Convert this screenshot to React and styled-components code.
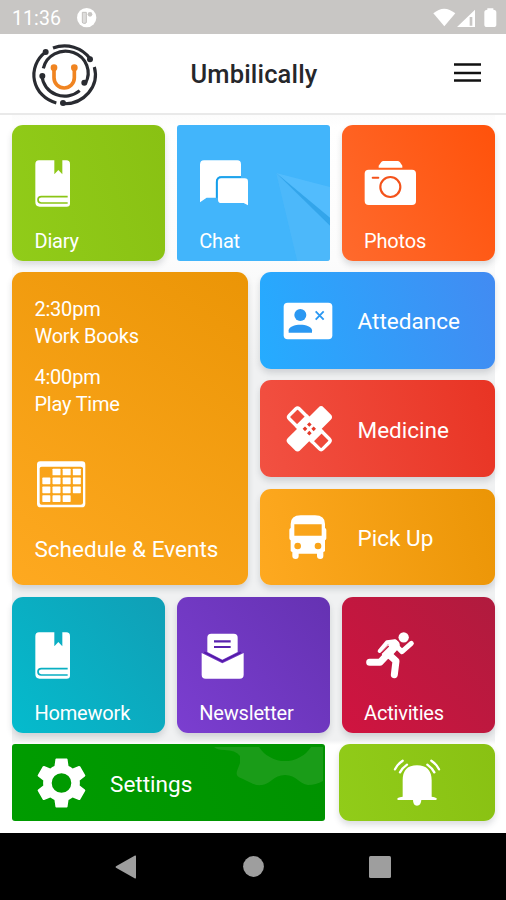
import React from "react";
import styled, { createGlobalStyle } from "styled-components";

const GlobalStyle = createGlobalStyle`
  * { box-sizing: border-box; }
  body { margin: 0; background: #fff; font-family: Roboto, "Noto Sans", sans-serif; }
`;

const Screen = styled.div`
  width: 506px;
  height: 900px;
  display: flex;
  flex-direction: column;
  overflow: hidden;
  background: #fff;
`;

const StatusBar = styled.div`
  height: 34px;
  flex: none;
  background: #c8c6c4;
  display: flex;
  align-items: center;
  padding: 2px 9px 0 12px;
  color: #fff;
`;

const Clock = styled.span`
  font-size: 19.5px;
  letter-spacing: 0.1px;
  width: 64.5px;
  line-height: 24px;
  padding-top: 1px;
`;

const StatusIcons = styled.div`
  margin-left: auto;
  display: flex;
`;

const Svg = styled.svg`
  display: block;
  flex: none;
  overflow: visible;
`;

const Header = styled.header`
  height: 81px;
  flex: none;
  display: grid;
  grid-template-columns: 1fr auto 1fr;
  align-items: center;
  padding: 0 25px 0 27px;
  border-bottom: 2px solid #e9e9e9;
`;

const Brand = styled.div`
  padding: 3px 0 0 4.5px;
`;

const Title = styled.h1`
  margin: 1px 0 0;
  font-size: 25.5px;
  line-height: 30px;
  font-weight: 500;
  color: #26272b;
  letter-spacing: 0.15px;
`;

const MenuButton = styled.button`
  justify-self: end;
  border: 0;
  padding: 0;
  margin-bottom: 2px;
  background: none;
`;

const Board = styled.main`
  flex: 1;
  width: 483px;
  margin-left: 12px;
  padding-top: 9.5px;
  display: flex;
  flex-direction: column;
  background: linear-gradient(#fcfcfc 0, #fff 12px, #fcfcfc 145px, #f0f1f2 250px, #f0f1f2 625px, #fff 630px);
`;

const Row = styled.div`
  display: flex;
  flex: none;
  gap: ${(p) => p.$gap || 11.5}px;
  margin-bottom: ${(p) => p.$after || 0}px;
`;

const Stack = styled.div`
  display: flex;
  flex-direction: column;
  gap: 11.8px;
  width: 235.5px;
`;

const Tile = styled.section`
  width: ${(p) => p.$width || 153.3}px;
  height: ${(p) => p.$height || 136}px;
  flex: none;
  overflow: hidden;
  position: relative;
  border-radius: ${(p) => (p.$flat ? 3 : 11)}px;
  background: ${(p) => p.$fill};
  box-shadow: ${(p) => (p.$flat ? "none" : "0 4px 6px rgba(50, 60, 70, 0.17)")};
  color: #fff;
`;

const SquareTile = styled(Tile)`
  display: flex;
  flex-direction: column;
  padding: 35px 0 0 22.5px;
`;

const WideTile = styled(Tile)`
  display: flex;
  align-items: center;
  padding-left: ${(p) => (p.$center ? 0 : 23.5)}px;
  justify-content: ${(p) => (p.$center ? "center" : "flex-start")};
`;

const IconSlot = styled.div`
  height: 69px;
  flex: none;
`;

const Label = styled.span`
  font-size: 20px;
  line-height: 24px;
  letter-spacing: -0.2px;
  white-space: nowrap;
`;

const WideLabel = styled(Label)`
  font-size: 22.5px;
  line-height: 26px;
  letter-spacing: 0.02px;
  padding: 2px 0 0 ${(p) => p.$indent || 24.5}px;
`;

const ScheduleTile = styled(Tile)`
  padding: 23.5px 0 0 22.4px;
  display: flex;
  flex-direction: column;
`;

const EventItem = styled.p`
  margin: 0 0 14px;
  font-size: 20px;
  line-height: 27px;
  letter-spacing: -0.2px;
  span { display: block; }
`;

const CalendarSlot = styled.div`
  padding: 29px 0 0 2.6px;
  height: 102px;
`;

const Backdrop = styled.svg`
  position: absolute;
  inset: 0;
  width: 100%;
  height: 100%;
`;

const NavBar = styled.nav`
  height: 67px;
  flex: none;
  background: #000;
  display: flex;
  align-items: center;
  justify-content: space-between;
  padding: 0 115px;
`;

const HomeButton = styled.div`
  padding-left: 2px;
`;

const BookIcon = ({ ink }) => (
  <Svg width="36" height="48" viewBox="105 124 108 144">
    <path
      fill="#fff"
      d="M117 125H163V167L175 154L187 167V125H199Q210 125 210 136V255Q210 264 200 264H119Q106 264 106 250V137Q106 125 117 125Z"
    />
    <path d="M203 234H124Q114 234 114 243.500T124 253H203" fill="none" stroke={ink} strokeWidth="5" />
  </Svg>
);

const ChatIcon = () => (
  <Svg width="50" height="48" viewBox="599 124 150 144">
    <path fill="#fff" d="M614 125H714Q725 125 725 137V173H667Q650 173 650 190V237H622L602 251V138Q602 125 614 125Z" />
    <path fill="#fff" d="M666 179H736Q746 179 746 189V260L733 253H666Q656 253 656 243V189Q656 179 666 179Z" />
    <path d="M652 237V190Q652 175 667 175H725" fill="none" stroke="#159ee8" strokeWidth="5" />
  </Svg>
);

const CameraIcon = () => (
  <Svg width="53" height="48" viewBox="333 124 159 144">
    <path fill="#fff" d="M377 147V141L385 130Q387 127 392 127H433Q438 127 441 131L448 141V147Z" />
    <rect x="335" y="153" width="154" height="106" rx="12" fill="#fff" />
    <circle cx="412" cy="205" r="30" fill="none" stroke="#f4531b" strokeWidth="6.500" />
    <path d="M359 177H376" stroke="#f4531b" strokeWidth="6" strokeLinecap="round" />
  </Svg>
);

const calendarCells = [
  [1, 2, 3],
  [0, 1, 2, 3],
  [0, 1, 2, 3],
  [0, 1, 2],
];

const CalendarIcon = () => (
  <Svg width="49" height="47" viewBox="110 578 147 141">
    <path
      fill="#fff"
      fillRule="evenodd"
      d="M120 579H245Q255 579 255 589V706Q255 717 244 717H121Q110 717 110 706V589Q110 579 120 579ZM124 595Q118 595 118 600V703Q118 709 124 709H241Q248 709 248 703V600Q248 595 241 595Z"
    />
    {calendarCells.map((row, y) =>
      row.map((x) => (
        <rect key={`${x}-${y}`} x={126 + x * 30.5} y={601 + y * 26.7} width="24" height="20" rx="2" fill="#fff" />
      ))
    )}
  </Svg>
);

const ContactIcon = () => (
  <Svg width="50" height="38" viewBox="90 99 150 114">
    <rect x="92" y="104" width="146" height="110" rx="12" fill="#fff" />
    <g fill="#2b98f2">
      <circle cx="142" cy="141" r="18" />
      <path d="M107 194V187C107 176 126 170 142 170S177 176 177 187V194Z" />
    </g>
    <path d="M188 130L212 155M212 130L188 155" stroke="#2b98f2" strokeWidth="5.500" />
  </Svg>
);

const BandageIcon = () => (
  <Svg width="50" height="48" viewBox="91 88 150 144">
    <g transform="translate(170 159.500)">
      <g transform="rotate(45)">
        <rect x="-71" y="-21" width="142" height="42" rx="7" fill="none" stroke="#fff" strokeWidth="10" />
        <path d="M-36 -26H36V26H-36Z" fill="#fff" />
      </g>
      <g transform="rotate(-45)">
        <rect x="-76" y="-26" width="152" height="52" rx="11" fill="#fff" />
      </g>
      <path
        d="M0 -20L7 -13L0 -6L-7 -13ZM0 6L7 13L0 20L-7 13ZM-13 -7L-6 0L-13 7L-20 0ZM13 -7L20 0L13 7L6 0Z"
        fill="#e53a2b"
      />
    </g>
  </Svg>
);

const BusIcon = () => (
  <Svg width="50" height="48" viewBox="90 90 150 144">
    <path
      fill="#fff"
      fillRule="evenodd"
      d="M113 123Q113 97 143 97H186Q216 97 216 123V135Q220 136 220 141V166Q220 171 216 172V203Q216 206 211 207V219Q211 228 202 228Q192 228 192 219V212H137V219Q137 228 128 228Q118 228 118 219V207Q113 206 113 203V172Q109 171 109 166V141Q109 136 113 135ZM124 124V158H206V124ZM134 179A10 10 0 1 0 134 199A10 10 0 1 0 134 179ZM195 179A10 10 0 1 0 195 199A10 10 0 1 0 195 179Z"
    />
  </Svg>
);

const NewsletterIcon = () => (
  <Svg width="45" height="48" viewBox="598 124 135 144">
    <path fill="#fff" d="M635 129H702Q714 129 714 141V184L668 207L623 184V141Q623 129 635 129Z" />
    <path fill="#fff" d="M606 187L668 218L732 187V252Q732 264 720 264H618Q606 264 606 252Z" />
    <path d="M643 152H693M643 169H693" stroke="#5822ae" strokeWidth="6.500" />
    <path d="M614 185L668 212L724 185" fill="none" stroke="#5419a8" strokeWidth="5" />
  </Svg>
);

const RunnerIcon = () => (
  <Svg width="51" height="48" viewBox="333 125 153 144">
    <circle cx="452" cy="141" r="15.500" fill="#fff" />
    <g fill="none" stroke="#fff" strokeLinecap="round" strokeLinejoin="round">
      <path d="M380 182L402 156L426 153" strokeWidth="12" />
      <path d="M423 160L447 184L475 159" strokeWidth="15" />
      <path d="M425 164L402 190" strokeWidth="31" />
      <path d="M400 196L381 216H350" strokeWidth="21" />
      <path d="M407 192L429 212L424 253" strokeWidth="21" />
    </g>
    <path d="M407 167L386 188" stroke="#c6173d" strokeWidth="4" />
  </Svg>
);

const GearIcon = () => (
  <Svg width="50" height="50" viewBox="1.600 1.800 20.400 20.400">
    <path
      fill="#fff"
      fillRule="evenodd"
      d="M19.430 12.980c.04-.32.07-.64.07-.98s-.03-.66-.07-.98l2.110-1.650c.19-.15.24-.42.12-.64l-2-3.460c-.12-.22-.39-.3-.61-.22l-2.490 1c-.52-.4-1.080-.73-1.690-.98l-.38-2.650C14.460 2.180 14.250 2 14 2h-4c-.25 0-.46.18-.49.42l-.38 2.650c-.61.25-1.170.59-1.690.98l-2.490-1c-.23-.09-.49 0-.61.22l-2 3.460c-.13.22-.07.49.12.64l2.110 1.650c-.04.32-.07.65-.07.98s.03.66.07.98l-2.110 1.650c-.19.15-.24.42-.12.64l2 3.460c.12.22.39.3.61.22l2.490-1c.52.4 1.080.73 1.690.98l.38 2.650c.03.24.24.42.49.42h4c.25 0 .46-.18.49-.42l.38-2.650c.61-.25 1.170-.59 1.690-.98l2.490 1c.23.09.49 0 .61-.22l2-3.460c.12-.22.07-.49-.12-.64l-2.110-1.650zM12 16a4 4 0 1 1 0-8 4 4 0 0 1 0 8z"
    />
  </Svg>
);

const BellIcon = () => (
  <Svg width="47" height="47" viewBox="421 64 141 141">
    <path
      fill="#fff"
      d="M450 177V128Q450 83 493 83T537 128V177Q546 178 552 182Q554 187 549 187H506Q505 204 493 204T481 187H438Q432 187 435 181Q441 178 450 177Z"
    />
    <path
      d="M427 95Q435 79 450 69M442 104Q449 91 463 81M559 95Q551 79 536 69M545 104Q538 91 524 81"
      fill="none"
      stroke="#fff"
      strokeWidth="7"
      strokeLinecap="round"
    />
  </Svg>
);

const Logo = () => (
  <Svg width="66" height="66" viewBox="96 127 198 198">
    <g fill="none" stroke="#292b31" strokeWidth="9.500">
      <path d="M137 157A92.500 87.500 0 0 0 169 310" />
      <path d="M159 145A92.500 87.500 0 0 1 271 178" />
      <path d="M283 202A92.500 87.500 0 0 1 189 312" />
      <path d="M130 206A68 65 0 1 1 256 251" />
      <path d="M126 229A68 65 0 0 0 239 273" />
    </g>
    <g fill="#292b31">
      <circle cx="137" cy="157" r="9" />
      <circle cx="270" cy="179" r="9" />
      <circle cx="189" cy="310" r="9" />
      <circle cx="253" cy="249" r="9" />
      <circle cx="127" cy="229" r="9" />
    </g>
    <path d="M162 204V234A30.500 31 0 0 0 223 234V204" fill="none" stroke="#f08421" strokeWidth="11" />
    <circle cx="162" cy="204" r="10" fill="#f08421" />
    <circle cx="223" cy="204" r="10" fill="#f08421" />
  </Svg>
);

const PlaneBackdrop = () => (
  <Backdrop viewBox="0 0 153 136" preserveAspectRatio="none">
    <path d="M99 48L153 62V136H120Z" fill="#62c4ff" opacity=".5" />
    <path d="M99 48L153 93V101Z" fill="#148ed8" opacity=".5" />
    <path d="M99 48L153 101V136H120Z" fill="#35aaf0" opacity=".2" />
  </Backdrop>
);

const GearBackdrop = () => (
  <Backdrop viewBox="0 0 312.500 77">
    <path
      d="M202 3H247A31 31 0 0 0 299 3H311V37Q304 41 296 41C287 40 285 31 273 31S259 40 250 41C242 42 238 38 231 35C225 33 224 31 225 27L228 19V12Q224 6 212 6Q205 6 202 3Z"
      fill="#1e9d1c"
      opacity=".85"
    />
  </Backdrop>
);

const green = "linear-gradient(75deg, #91cc19, #89c113)";
const amber = (angle) => `linear-gradient(${angle}deg, #fea920, #eb9506)`;

export default function App() {
  return (
    <Screen>
      <GlobalStyle />
      <StatusBar>
        <Clock>11:36</Clock>
        <Svg width="21" height="20" viewBox="232 23 63 60">
          <circle cx="261" cy="52" r="29" fill="#fff" />
          <path d="M248 36H260V65Q260 69 256 69H252Q248 69 248 65Z" fill="#dedddc" stroke="#c3c1bf" strokeWidth="3" />
          <circle cx="271" cy="42" r="7" fill="#c8c6c4" />
        </Svg>
        <StatusIcons>
          <Svg width="64" height="20" viewBox="539 23 192 60">
            <path d="M540 39Q572 11 606 39L573 78Z" fill="#fff" />
            <path fillRule="evenodd" d="M665 28V80H611ZM649 50V76H657V50Z" fill="#fff" />
            <path d="M702 28V24H720V28Q729 28 729 36V73Q729 80 721 80H701Q693 80 693 73V36Q693 28 702 28Z" fill="#fff" />
          </Svg>
        </StatusIcons>
      </StatusBar>
      <Header>
        <Brand><Logo /></Brand>
        <Title>Umbilically</Title>
        <MenuButton aria-label="Menu">
          <Svg width="27" height="19" viewBox="0 0 27 19">
            <path d="M0 1.500H27M0 10H27M0 17.500H27" stroke="#111" strokeWidth="2.400" />
          </Svg>
        </MenuButton>
      </Header>
      <Board>
        <Row $after={11.5}>
          <SquareTile $fill={green}>
            <IconSlot><BookIcon ink="#8bc516" /></IconSlot>
            <Label>Diary</Label>
          </SquareTile>
          <SquareTile $flat $fill="#42b5fb">
            <PlaneBackdrop />
            <IconSlot><ChatIcon /></IconSlot>
            <Label>Chat</Label>
          </SquareTile>
          <SquareTile $fill="linear-gradient(60deg, #ff6a2d, #ff520b)">
            <IconSlot><CameraIcon /></IconSlot>
            <Label>Photos</Label>
          </SquareTile>
        </Row>
        <Row $after={11.7}>
          <ScheduleTile $width={236} $height={313} $fill={amber(35)}>
            <EventItem><span>2:30pm</span><span>Work Books</span></EventItem>
            <EventItem><span>4:00pm</span><span>Play Time</span></EventItem>
            <CalendarSlot><CalendarIcon /></CalendarSlot>
            <WideLabel $indent="0">Schedule &amp; Events</WideLabel>
          </ScheduleTile>
          <Stack>
            <WideTile $width={235.5} $height={96.5} $fill="linear-gradient(75deg, #25acff, #428bf2)">
              <ContactIcon />
              <WideLabel>Attedance</WideLabel>
            </WideTile>
            <WideTile $width={235.5} $height={96.5} $fill="linear-gradient(75deg, #f25142, #e83424)">
              <BandageIcon />
              <WideLabel>Medicine</WideLabel>
            </WideTile>
            <WideTile $width={235.5} $height={96.5} $fill={amber(75)}>
              <BusIcon />
              <WideLabel>Pick Up</WideLabel>
            </WideTile>
          </Stack>
        </Row>
        <Row $after={11.5}>
          <SquareTile $fill="linear-gradient(50deg, #05bbcd, #109fb6)">
            <IconSlot><BookIcon ink="#08afc2" /></IconSlot>
            <Label>Homework</Label>
          </SquareTile>
          <SquareTile $fill="linear-gradient(50deg, #7b3ed0, #6532b2)">
            <IconSlot><NewsletterIcon /></IconSlot>
            <Label>Newsletter</Label>
          </SquareTile>
          <SquareTile $fill="linear-gradient(50deg, #d01440, #b01b3e)">
            <IconSlot><RunnerIcon /></IconSlot>
            <Label>Activities</Label>
          </SquareTile>
        </Row>
        <Row $gap={14.2}>
          <WideTile $flat $width={312.5} $height={77} $fill="linear-gradient(75deg, #009c00, #009200)">
            <GearBackdrop />
            <GearIcon />
            <WideLabel>Settings</WideLabel>
          </WideTile>
          <WideTile $center $width={156.3} $height={77} $fill={green}>
            <BellIcon />
          </WideTile>
        </Row>
      </Board>
      <NavBar>
        <Svg width="21" height="24" viewBox="0 0 21 24">
          <path d="M1 11.200L20 .6Q21 0 21 1.500V22.500Q21 24 20 23.400L1 12.800Q0 12 1 11.200Z" fill="#9e9e9e" />
        </Svg>
        <HomeButton>
          <Svg width="21" height="21" viewBox="0 0 21 21">
            <circle cx="10.500" cy="10.500" r="10.400" fill="#9e9e9e" />
          </Svg>
        </HomeButton>
        <Svg width="22" height="22" viewBox="0 0 22 22">
          <rect width="22" height="22" rx="1.500" fill="#9e9e9e" />
        </Svg>
      </NavBar>
    </Screen>
  );
}
